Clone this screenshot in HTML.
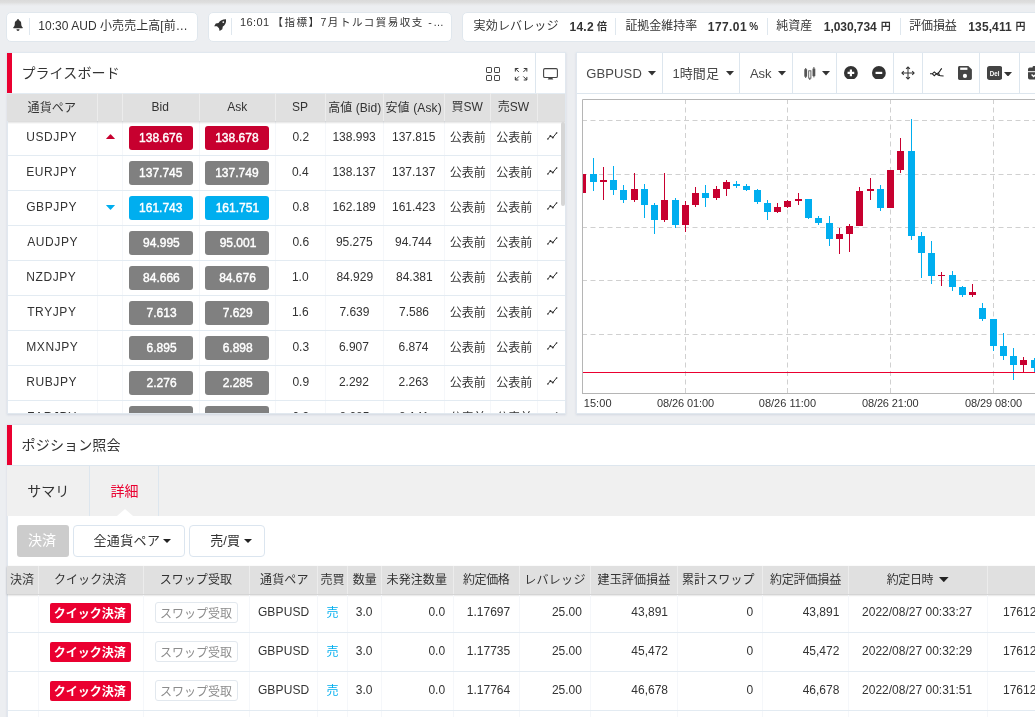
<!DOCTYPE html><html lang="ja"><head><meta charset="utf-8"><title>FX</title><style>
*{box-sizing:border-box;margin:0;padding:0}
html,body{width:1035px;height:717px;overflow:hidden}
body{background:#eceef1;font-family:"Liberation Sans","Noto Sans CJK JP",sans-serif;color:#333;font-size:12px;position:relative}
.abs{position:absolute}
.topshadow{left:0;top:0;width:1035px;height:6px;background:linear-gradient(#dadada 0,#dedede 40%,#e7e8ea 72%,#eceef1 100%)}
.tbox{background:#fff;border:1px solid #e0e7ed;border-radius:5px}
.panel{background:#fff;border:1px solid #e1e8ef;box-shadow:0 1px 2px rgba(160,175,195,.35)}
.redbar{background:#ea0030}
.t{white-space:nowrap;line-height:20px}
.vsep{width:1px;background:#dde6ee}
.hsep{height:1px;background:#e3ebf2}
.th{background:#e0e0e0}
.thsep{width:1px;background:#ececec}
.pb{border-radius:3px}
.pb.g{background:#808080}.pb.rd{background:#c7002f}.pb.bl{background:#00aeef}
.btn{border:1px solid #dbe5ef;border-radius:4px;background:#fff}
</style></head><body><div id="app" style="position:absolute;left:0;top:0;width:1035px;height:717px;overflow:hidden;will-change:transform"><div class="abs topshadow" style="left:0px;top:0px;width:1035px;height:6px;"></div>
<div class="abs tbox" style="left:6px;top:12px;width:192px;height:30px;"></div>
<svg class="abs" style="left:13px;top:19.400px" width="10" height="12" viewBox="0 0 10 12"><path d="M5 0C5.600 0 5.900 0.400 5.900 0.900V1.200C7.400 1.600 8.200 2.900 8.200 4.400C8.200 6.600 8.800 7.600 9.700 8.400C10.100 8.800 9.900 9.300 9.400 9.300H0.600C0.100 9.300 -0.100 8.800 0.300 8.400C1.200 7.600 1.800 6.600 1.800 4.400C1.800 2.900 2.600 1.600 4.100 1.200V0.900C4.100 0.400 4.400 0 5 0ZM3.500 10.300H6.500C6.500 11.200 5.800 12 5 12C4.200 12 3.500 11.200 3.500 10.300Z" fill="#333"/></svg>
<div class="abs " style="left:29px;top:18px;width:1px;height:17px;background:#dfe7ee"></div>
<div class="abs t" style="left:38.30px;top:15.80px;font-size:12px;letter-spacing:0.041px;">10:30 AUD 小売売上高[前…</div>
<div class="abs tbox" style="left:208px;top:12px;width:244px;height:30px;"></div>
<svg class="abs" style="left:213.900px;top:19.200px" width="12.400" height="12" viewBox="0 0 12.400 12"><path d="M12.100 0.300C12.400 3.200 11.200 5.800 8.800 7.600L8.300 10.200L5.600 12L5 9.200L3 7.300L0.200 7.300L1.800 4.500L4.500 3.900C6.200 1.500 9 0.100 12.100 0.300z" fill="#333"/><circle cx="9.300" cy="3.100" r="0.900" fill="#fff"/></svg>
<div class="abs " style="left:231px;top:18px;width:1px;height:17px;background:#dfe7ee"></div>
<div class="abs t" style="left:239.90px;top:12.00px;font-size:11px;letter-spacing:0.400px;">16:01</div>
<div class="abs t" style="left:272.40px;top:12.40px;font-size:10.5px;letter-spacing:1.527px;">【指標】7月トルコ貿易収支 -…</div>
<div class="abs tbox" style="left:462px;top:12px;width:600px;height:30px;"></div>
<div class="abs t" style="left:473.60px;top:16.10px;font-size:12px;letter-spacing:0.150px;">実効レバレッジ</div>
<div class="abs t" style="left:569.60px;top:16.60px;font-size:12px;font-weight:700;letter-spacing:0.200px;">14.2</div>
<div class="abs t" style="left:597.00px;top:17.30px;font-size:10px;font-weight:700;">倍</div>
<div class="abs " style="left:615px;top:18px;width:1px;height:17px;background:#dfe7ee"></div>
<div class="abs t" style="left:625.40px;top:16.10px;font-size:12px;letter-spacing:-0.040px;">証拠金維持率</div>
<div class="abs t" style="left:707.80px;top:16.60px;font-size:12px;font-weight:700;letter-spacing:0.420px;">177.01</div>
<div class="abs t" style="left:749.30px;top:17.30px;font-size:10px;font-weight:700;">%</div>
<div class="abs " style="left:767px;top:18px;width:1px;height:17px;background:#dfe7ee"></div>
<div class="abs t" style="left:776.35px;top:16.10px;font-size:12px;">純資産</div>
<div class="abs t" style="left:823.80px;top:16.60px;font-size:12px;font-weight:700;letter-spacing:-0.062px;">1,030,734</div>
<div class="abs t" style="left:880.85px;top:16.80px;font-size:10px;font-weight:700;">円</div>
<div class="abs " style="left:900px;top:18px;width:1px;height:17px;background:#dfe7ee"></div>
<div class="abs t" style="left:909.20px;top:16.10px;font-size:12px;letter-spacing:-0.133px;">評価損益</div>
<div class="abs t" style="left:968.30px;top:16.60px;font-size:12px;font-weight:700;letter-spacing:0.117px;">135,411</div>
<div class="abs t" style="left:1015.55px;top:16.80px;font-size:10px;font-weight:700;">円</div>
<div class="abs panel" style="left:7px;top:52px;width:559px;height:362px;"></div>
<div class="abs redbar" style="left:7px;top:53px;width:5px;height:40px;"></div>
<div class="abs t" style="left:21.40px;top:62.90px;font-size:14px;letter-spacing:0.117px;">プライスボード</div>
<svg class="abs" style="left:486px;top:67px" width="14" height="14" viewBox="0 0 14 14" fill="none" stroke="#444" stroke-width="1"><rect x="0.500" y="0.500" width="5" height="5" rx="0.600"/><rect x="8.500" y="0.500" width="5" height="5" rx="0.600"/><rect x="0.500" y="8.500" width="5" height="5" rx="0.600"/><rect x="8.500" y="8.500" width="5" height="5" rx="0.600"/></svg>
<svg class="abs" style="left:514px;top:66.600px" width="14.200" height="14.500" viewBox="0 0 16 16" fill="none" stroke="#333" stroke-width="1.100"><path d="M1.500 5V1.500H5M1.500 1.500L5.500 5.500M11 1.500h3.500V5M14.500 1.500L10.500 5.500M1.500 11v3.500H5M1.500 14.500L5.500 10.500M11 14.500h3.500V11M14.500 14.500L10.500 10.500"/></svg>
<div class="abs vsep" style="left:535px;top:53px;width:1px;height:40px;"></div>
<svg class="abs" style="left:543px;top:68px" width="15" height="12" viewBox="0 0 15 12"><rect x="0.600" y="0.600" width="13.800" height="8.900" rx="1.300" fill="none" stroke="#444" stroke-width="1.100"/><path d="M6 9.500h3l1.300 2h-5.600z" fill="#444"/></svg>
<div class="abs hsep" style="left:7px;top:93px;width:558px;height:1px;"></div>
<div class="abs th" style="left:7px;top:94px;width:558px;height:27px;"></div>
<div class="abs t" style="left:27.60px;top:97.70px;font-size:12px;letter-spacing:0.100px;">通貨ペア</div>
<div class="abs t" style="left:151.55px;top:97.30px;font-size:12px;">Bid</div>
<div class="abs t" style="left:227.30px;top:97.30px;font-size:12px;">Ask</div>
<div class="abs t" style="left:292.00px;top:97.30px;font-size:12px;">SP</div>
<div class="abs t" style="left:328.20px;top:97.70px;font-size:12px;letter-spacing:0.043px;">高値 (Bid)</div>
<div class="abs t" style="left:385.40px;top:97.70px;font-size:12px;letter-spacing:0.143px;">安値 (Ask)</div>
<div class="abs t" style="left:451.55px;top:97.20px;font-size:12px;">買SW</div>
<div class="abs t" style="left:497.65px;top:97.20px;font-size:12px;">売SW</div>
<div class="abs thsep" style="left:97px;top:93px;width:1px;height:28px;"></div>
<div class="abs thsep" style="left:122px;top:93px;width:1px;height:28px;"></div>
<div class="abs thsep" style="left:199px;top:93px;width:1px;height:28px;"></div>
<div class="abs thsep" style="left:275px;top:93px;width:1px;height:28px;"></div>
<div class="abs thsep" style="left:325px;top:93px;width:1px;height:28px;"></div>
<div class="abs thsep" style="left:383px;top:93px;width:1px;height:28px;"></div>
<div class="abs thsep" style="left:444px;top:93px;width:1px;height:28px;"></div>
<div class="abs thsep" style="left:490px;top:93px;width:1px;height:28px;"></div>
<div class="abs thsep" style="left:537px;top:93px;width:1px;height:28px;"></div>
<div class="abs" style="left:0;top:121px;width:565px;height:292px;overflow:hidden">
<div class="abs " style="left:97px;top:0px;width:1px;height:292px;background:#f5f7fa"></div>
<div class="abs " style="left:122px;top:0px;width:1px;height:292px;background:#f5f7fa"></div>
<div class="abs " style="left:199px;top:0px;width:1px;height:292px;background:#f5f7fa"></div>
<div class="abs " style="left:275px;top:0px;width:1px;height:292px;background:#f5f7fa"></div>
<div class="abs " style="left:325px;top:0px;width:1px;height:292px;background:#f5f7fa"></div>
<div class="abs " style="left:383px;top:0px;width:1px;height:292px;background:#f5f7fa"></div>
<div class="abs " style="left:444px;top:0px;width:1px;height:292px;background:#f5f7fa"></div>
<div class="abs " style="left:490px;top:0px;width:1px;height:292px;background:#f5f7fa"></div>
<div class="abs " style="left:537px;top:0px;width:1px;height:292px;background:#f5f7fa"></div>
<div class="abs t" style="left:26.20px;top:6.30px;font-size:12px;letter-spacing:0.600px;">USDJPY</div>
<svg class="abs" style="left:105.500px;top:13px" width="9" height="5.200" viewBox="0 0 9 5"><path d="M0.400 5Q-0.100 5 0.300 4.500L4 0.500Q4.500 0 5 0.500L8.700 4.500Q9.100 5 8.600 5z" fill="#c7002f"/></svg>
<div class="abs pb rd" style="left:129px;top:5px;width:64px;height:24px;"></div>
<div class="abs pb rd" style="left:205px;top:5px;width:64px;height:24px;"></div>
<div class="abs t" style="left:139.10px;top:7.00px;font-size:12px;color:#fff;-webkit-text-stroke:0.4px #fff;">138.676</div>
<div class="abs t" style="left:215.20px;top:7.00px;font-size:12px;color:#fff;-webkit-text-stroke:0.4px #fff;">138.678</div>
<div class="abs t" style="left:292.40px;top:6.30px;font-size:12px;">0.2</div>
<div class="abs t" style="left:332.40px;top:6.30px;font-size:12px;">138.993</div>
<div class="abs t" style="left:392.00px;top:6.30px;font-size:12px;">137.815</div>
<div class="abs t" style="left:449.65px;top:7.30px;font-size:12px;">公表前</div>
<div class="abs t" style="left:496.25px;top:7.30px;font-size:12px;">公表前</div>
<svg class="abs" style="left:547.300px;top:11.0px" width="10.600" height="8" viewBox="0 0 10.600 8" fill="none" stroke="#333" stroke-width="1"><path d="M0.600 7.200L3.400 4L5.800 5.600L9.800 0.700"/><circle cx="0.900" cy="7" r="0.800" fill="#333" stroke="none"/><circle cx="3.400" cy="4" r="1" fill="#333" stroke="none"/><circle cx="5.800" cy="5.600" r="1" fill="#333" stroke="none"/><circle cx="9.600" cy="1" r="0.800" fill="#333" stroke="none"/></svg>
<div class="abs hsep" style="left:8px;top:34px;width:557px;height:1px;"></div>
<div class="abs t" style="left:26.20px;top:41.30px;font-size:12px;letter-spacing:0.600px;">EURJPY</div>
<div class="abs pb g" style="left:129px;top:40px;width:64px;height:24px;"></div>
<div class="abs pb g" style="left:205px;top:40px;width:64px;height:24px;"></div>
<div class="abs t" style="left:139.10px;top:42.00px;font-size:12px;color:#fff;-webkit-text-stroke:0.4px #fff;">137.745</div>
<div class="abs t" style="left:215.20px;top:42.00px;font-size:12px;color:#fff;-webkit-text-stroke:0.4px #fff;">137.749</div>
<div class="abs t" style="left:291.90px;top:41.30px;font-size:12px;">0.4</div>
<div class="abs t" style="left:332.40px;top:41.30px;font-size:12px;">138.137</div>
<div class="abs t" style="left:392.00px;top:41.30px;font-size:12px;">137.137</div>
<div class="abs t" style="left:449.65px;top:42.30px;font-size:12px;">公表前</div>
<div class="abs t" style="left:496.25px;top:42.30px;font-size:12px;">公表前</div>
<svg class="abs" style="left:547.300px;top:46.0px" width="10.600" height="8" viewBox="0 0 10.600 8" fill="none" stroke="#333" stroke-width="1"><path d="M0.600 7.200L3.400 4L5.800 5.600L9.800 0.700"/><circle cx="0.900" cy="7" r="0.800" fill="#333" stroke="none"/><circle cx="3.400" cy="4" r="1" fill="#333" stroke="none"/><circle cx="5.800" cy="5.600" r="1" fill="#333" stroke="none"/><circle cx="9.600" cy="1" r="0.800" fill="#333" stroke="none"/></svg>
<div class="abs hsep" style="left:8px;top:69px;width:557px;height:1px;"></div>
<div class="abs t" style="left:26.20px;top:76.30px;font-size:12px;letter-spacing:0.600px;">GBPJPY</div>
<svg class="abs" style="left:105.500px;top:84px" width="9" height="5" viewBox="0 0 9 5"><path d="M0.400 0Q-0.100 0 0.300 0.500L4 4.500Q4.500 5 5 4.500L8.700 0.500Q9.100 0 8.600 0z" fill="#00aeef"/></svg>
<div class="abs pb bl" style="left:129px;top:75px;width:64px;height:24px;"></div>
<div class="abs pb bl" style="left:205px;top:75px;width:64px;height:24px;"></div>
<div class="abs t" style="left:139.10px;top:77.00px;font-size:12px;color:#fff;-webkit-text-stroke:0.4px #fff;">161.743</div>
<div class="abs t" style="left:215.70px;top:77.00px;font-size:12px;color:#fff;-webkit-text-stroke:0.4px #fff;">161.751</div>
<div class="abs t" style="left:292.40px;top:76.30px;font-size:12px;">0.8</div>
<div class="abs t" style="left:332.40px;top:76.30px;font-size:12px;">162.189</div>
<div class="abs t" style="left:392.00px;top:76.30px;font-size:12px;">161.423</div>
<div class="abs t" style="left:449.65px;top:77.30px;font-size:12px;">公表前</div>
<div class="abs t" style="left:496.25px;top:77.30px;font-size:12px;">公表前</div>
<svg class="abs" style="left:547.300px;top:81.0px" width="10.600" height="8" viewBox="0 0 10.600 8" fill="none" stroke="#333" stroke-width="1"><path d="M0.600 7.200L3.400 4L5.800 5.600L9.800 0.700"/><circle cx="0.900" cy="7" r="0.800" fill="#333" stroke="none"/><circle cx="3.400" cy="4" r="1" fill="#333" stroke="none"/><circle cx="5.800" cy="5.600" r="1" fill="#333" stroke="none"/><circle cx="9.600" cy="1" r="0.800" fill="#333" stroke="none"/></svg>
<div class="abs hsep" style="left:8px;top:104px;width:557px;height:1px;"></div>
<div class="abs t" style="left:27.20px;top:111.30px;font-size:12px;letter-spacing:0.600px;">AUDJPY</div>
<div class="abs pb g" style="left:129px;top:110px;width:64px;height:24px;"></div>
<div class="abs pb g" style="left:205px;top:110px;width:64px;height:24px;"></div>
<div class="abs t" style="left:143.10px;top:112.00px;font-size:12px;color:#fff;-webkit-text-stroke:0.4px #fff;">94.995</div>
<div class="abs t" style="left:219.70px;top:112.00px;font-size:12px;color:#fff;-webkit-text-stroke:0.4px #fff;">95.001</div>
<div class="abs t" style="left:292.40px;top:111.30px;font-size:12px;">0.6</div>
<div class="abs t" style="left:335.90px;top:111.30px;font-size:12px;">95.275</div>
<div class="abs t" style="left:395.00px;top:111.30px;font-size:12px;">94.744</div>
<div class="abs t" style="left:449.65px;top:112.30px;font-size:12px;">公表前</div>
<div class="abs t" style="left:496.25px;top:112.30px;font-size:12px;">公表前</div>
<svg class="abs" style="left:547.300px;top:116.0px" width="10.600" height="8" viewBox="0 0 10.600 8" fill="none" stroke="#333" stroke-width="1"><path d="M0.600 7.200L3.400 4L5.800 5.600L9.800 0.700"/><circle cx="0.900" cy="7" r="0.800" fill="#333" stroke="none"/><circle cx="3.400" cy="4" r="1" fill="#333" stroke="none"/><circle cx="5.800" cy="5.600" r="1" fill="#333" stroke="none"/><circle cx="9.600" cy="1" r="0.800" fill="#333" stroke="none"/></svg>
<div class="abs hsep" style="left:8px;top:139px;width:557px;height:1px;"></div>
<div class="abs t" style="left:26.20px;top:146.30px;font-size:12px;letter-spacing:0.600px;">NZDJPY</div>
<div class="abs pb g" style="left:129px;top:145px;width:64px;height:24px;"></div>
<div class="abs pb g" style="left:205px;top:145px;width:64px;height:24px;"></div>
<div class="abs t" style="left:143.10px;top:147.00px;font-size:12px;color:#fff;-webkit-text-stroke:0.4px #fff;">84.666</div>
<div class="abs t" style="left:219.20px;top:147.00px;font-size:12px;color:#fff;-webkit-text-stroke:0.4px #fff;">84.676</div>
<div class="abs t" style="left:291.90px;top:146.30px;font-size:12px;">1.0</div>
<div class="abs t" style="left:336.40px;top:146.30px;font-size:12px;">84.929</div>
<div class="abs t" style="left:396.00px;top:146.30px;font-size:12px;">84.381</div>
<div class="abs t" style="left:449.65px;top:147.30px;font-size:12px;">公表前</div>
<div class="abs t" style="left:496.25px;top:147.30px;font-size:12px;">公表前</div>
<svg class="abs" style="left:547.300px;top:151.0px" width="10.600" height="8" viewBox="0 0 10.600 8" fill="none" stroke="#333" stroke-width="1"><path d="M0.600 7.200L3.400 4L5.800 5.600L9.800 0.700"/><circle cx="0.900" cy="7" r="0.800" fill="#333" stroke="none"/><circle cx="3.400" cy="4" r="1" fill="#333" stroke="none"/><circle cx="5.800" cy="5.600" r="1" fill="#333" stroke="none"/><circle cx="9.600" cy="1" r="0.800" fill="#333" stroke="none"/></svg>
<div class="abs hsep" style="left:8px;top:174px;width:557px;height:1px;"></div>
<div class="abs t" style="left:27.20px;top:181.30px;font-size:12px;letter-spacing:0.600px;">TRYJPY</div>
<div class="abs pb g" style="left:129px;top:180px;width:64px;height:24px;"></div>
<div class="abs pb g" style="left:205px;top:180px;width:64px;height:24px;"></div>
<div class="abs t" style="left:146.60px;top:182.00px;font-size:12px;color:#fff;-webkit-text-stroke:0.4px #fff;">7.613</div>
<div class="abs t" style="left:222.70px;top:182.00px;font-size:12px;color:#fff;-webkit-text-stroke:0.4px #fff;">7.629</div>
<div class="abs t" style="left:291.90px;top:181.30px;font-size:12px;">1.6</div>
<div class="abs t" style="left:339.40px;top:181.30px;font-size:12px;">7.639</div>
<div class="abs t" style="left:399.00px;top:181.30px;font-size:12px;">7.586</div>
<div class="abs t" style="left:449.65px;top:182.30px;font-size:12px;">公表前</div>
<div class="abs t" style="left:496.25px;top:182.30px;font-size:12px;">公表前</div>
<svg class="abs" style="left:547.300px;top:186.0px" width="10.600" height="8" viewBox="0 0 10.600 8" fill="none" stroke="#333" stroke-width="1"><path d="M0.600 7.200L3.400 4L5.800 5.600L9.800 0.700"/><circle cx="0.900" cy="7" r="0.800" fill="#333" stroke="none"/><circle cx="3.400" cy="4" r="1" fill="#333" stroke="none"/><circle cx="5.800" cy="5.600" r="1" fill="#333" stroke="none"/><circle cx="9.600" cy="1" r="0.800" fill="#333" stroke="none"/></svg>
<div class="abs hsep" style="left:8px;top:209px;width:557px;height:1px;"></div>
<div class="abs t" style="left:26.20px;top:216.30px;font-size:12px;letter-spacing:0.600px;">MXNJPY</div>
<div class="abs pb g" style="left:129px;top:215px;width:64px;height:24px;"></div>
<div class="abs pb g" style="left:205px;top:215px;width:64px;height:24px;"></div>
<div class="abs t" style="left:146.60px;top:217.00px;font-size:12px;color:#fff;-webkit-text-stroke:0.4px #fff;">6.895</div>
<div class="abs t" style="left:222.70px;top:217.00px;font-size:12px;color:#fff;-webkit-text-stroke:0.4px #fff;">6.898</div>
<div class="abs t" style="left:292.40px;top:216.30px;font-size:12px;">0.3</div>
<div class="abs t" style="left:338.90px;top:216.30px;font-size:12px;">6.907</div>
<div class="abs t" style="left:398.50px;top:216.30px;font-size:12px;">6.874</div>
<div class="abs t" style="left:449.65px;top:217.30px;font-size:12px;">公表前</div>
<div class="abs t" style="left:496.25px;top:217.30px;font-size:12px;">公表前</div>
<svg class="abs" style="left:547.300px;top:221.0px" width="10.600" height="8" viewBox="0 0 10.600 8" fill="none" stroke="#333" stroke-width="1"><path d="M0.600 7.200L3.400 4L5.800 5.600L9.800 0.700"/><circle cx="0.900" cy="7" r="0.800" fill="#333" stroke="none"/><circle cx="3.400" cy="4" r="1" fill="#333" stroke="none"/><circle cx="5.800" cy="5.600" r="1" fill="#333" stroke="none"/><circle cx="9.600" cy="1" r="0.800" fill="#333" stroke="none"/></svg>
<div class="abs hsep" style="left:8px;top:244px;width:557px;height:1px;"></div>
<div class="abs t" style="left:26.20px;top:251.30px;font-size:12px;letter-spacing:0.600px;">RUBJPY</div>
<div class="abs pb g" style="left:129px;top:250px;width:64px;height:24px;"></div>
<div class="abs pb g" style="left:205px;top:250px;width:64px;height:24px;"></div>
<div class="abs t" style="left:146.60px;top:252.00px;font-size:12px;color:#fff;-webkit-text-stroke:0.4px #fff;">2.276</div>
<div class="abs t" style="left:222.70px;top:252.00px;font-size:12px;color:#fff;-webkit-text-stroke:0.4px #fff;">2.285</div>
<div class="abs t" style="left:292.40px;top:251.30px;font-size:12px;">0.9</div>
<div class="abs t" style="left:338.90px;top:251.30px;font-size:12px;">2.292</div>
<div class="abs t" style="left:398.50px;top:251.30px;font-size:12px;">2.263</div>
<div class="abs t" style="left:449.65px;top:252.30px;font-size:12px;">公表前</div>
<div class="abs t" style="left:496.25px;top:252.30px;font-size:12px;">公表前</div>
<svg class="abs" style="left:547.300px;top:256.0px" width="10.600" height="8" viewBox="0 0 10.600 8" fill="none" stroke="#333" stroke-width="1"><path d="M0.600 7.200L3.400 4L5.800 5.600L9.800 0.700"/><circle cx="0.900" cy="7" r="0.800" fill="#333" stroke="none"/><circle cx="3.400" cy="4" r="1" fill="#333" stroke="none"/><circle cx="5.800" cy="5.600" r="1" fill="#333" stroke="none"/><circle cx="9.600" cy="1" r="0.800" fill="#333" stroke="none"/></svg>
<div class="abs hsep" style="left:8px;top:279px;width:557px;height:1px;"></div>
<div class="abs t" style="left:27.20px;top:286.30px;font-size:12px;letter-spacing:0.600px;">ZARJPY</div>
<div class="abs pb g" style="left:129px;top:285px;width:64px;height:24px;"></div>
<div class="abs pb g" style="left:205px;top:285px;width:64px;height:24px;"></div>
<div class="abs t" style="left:292.40px;top:286.30px;font-size:12px;">0.9</div>
<div class="abs t" style="left:339.40px;top:286.30px;font-size:12px;">8.285</div>
<div class="abs t" style="left:399.00px;top:286.30px;font-size:12px;">8.141</div>
<div class="abs t" style="left:449.65px;top:287.30px;font-size:12px;">公表前</div>
<div class="abs t" style="left:496.25px;top:287.30px;font-size:12px;">公表前</div>
<svg class="abs" style="left:547.300px;top:291.0px" width="10.600" height="8" viewBox="0 0 10.600 8" fill="none" stroke="#333" stroke-width="1"><path d="M0.600 7.200L3.400 4L5.800 5.600L9.800 0.700"/><circle cx="0.900" cy="7" r="0.800" fill="#333" stroke="none"/><circle cx="3.400" cy="4" r="1" fill="#333" stroke="none"/><circle cx="5.800" cy="5.600" r="1" fill="#333" stroke="none"/><circle cx="9.600" cy="1" r="0.800" fill="#333" stroke="none"/></svg>
<div class="abs hsep" style="left:8px;top:314px;width:557px;height:1px;"></div>
</div>
<div class="abs " style="left:8px;top:121px;width:557px;height:3px;background:linear-gradient(rgba(0,0,0,.16),rgba(0,0,0,0))"></div>
<div class="abs " style="left:561px;top:122px;width:3.5px;height:83.5px;background:#d6d6d6;border-radius:2px"></div>
<div class="abs panel" style="left:576px;top:52px;width:470px;height:362px;"></div>
<div class="abs vsep" style="left:662px;top:53px;width:1px;height:40px;"></div>
<div class="abs vsep" style="left:739px;top:53px;width:1px;height:40px;"></div>
<div class="abs vsep" style="left:792px;top:53px;width:1px;height:40px;"></div>
<div class="abs vsep" style="left:836px;top:53px;width:1px;height:40px;"></div>
<div class="abs vsep" style="left:893px;top:53px;width:1px;height:40px;"></div>
<div class="abs vsep" style="left:922px;top:53px;width:1px;height:40px;"></div>
<div class="abs vsep" style="left:979px;top:53px;width:1px;height:40px;"></div>
<div class="abs vsep" style="left:1019px;top:53px;width:1px;height:40px;"></div>
<div class="abs " style="left:577px;top:93px;width:460px;height:1px;background:#dde6ee"></div>
<div class="abs t" style="left:586.30px;top:64.00px;font-size:13px;letter-spacing:0.120px;color:#484848;">GBPUSD</div>
<svg class="abs" style="left:648.4px;top:71.3px" width="8.0" height="4.6000000000000085" viewBox="0 0 8.0 4.6000000000000085"><path d="M0 0H8.0L4.0 4.6000000000000085z" fill="#333"/></svg>
<div class="abs t" style="left:672.50px;top:64.30px;font-size:13px;letter-spacing:0.067px;color:#484848;">1時間足</div>
<svg class="abs" style="left:725.5px;top:71.3px" width="8.0" height="4.6000000000000085" viewBox="0 0 8.0 4.6000000000000085"><path d="M0 0H8.0L4.0 4.6000000000000085z" fill="#333"/></svg>
<div class="abs t" style="left:749.95px;top:64.00px;font-size:13px;color:#484848;">Ask</div>
<svg class="abs" style="left:778px;top:71.3px" width="8" height="4.6000000000000085" viewBox="0 0 8 4.6000000000000085"><path d="M0 0H8L4.0 4.6000000000000085z" fill="#333"/></svg>
<svg class="abs" style="left:803.500px;top:66.500px" width="12" height="13" viewBox="0 0 12 13"><g fill="#555"><rect x="0.300" y="2.200" width="2.800" height="7.500"/><rect x="1.200" y="1" width="1" height="10"/><rect x="8.500" y="1.600" width="2.800" height="7.500"/><rect x="9.400" y="0" width="1" height="10.400"/><rect x="5.300" y="5" width="1" height="8"/></g><rect x="4.700" y="3.800" width="2.200" height="7.400" fill="#fff" stroke="#555" stroke-width="0.900"/></svg>
<svg class="abs" style="left:822.2px;top:71px" width="8.0" height="4.599999999999994" viewBox="0 0 8.0 4.599999999999994"><path d="M0 0H8.0L4.0 4.599999999999994z" fill="#333"/></svg>
<svg class="abs" style="left:844px;top:65.700px" width="13.800" height="13.800" viewBox="0 0 14 14"><circle cx="7" cy="7" r="7" fill="#333"/><path d="M3.600 7h6.800M7 3.600v6.800" stroke="#fff" stroke-width="2.200"/></svg>
<svg class="abs" style="left:871.800px;top:65.700px" width="13.800" height="13.800" viewBox="0 0 14 14"><circle cx="7" cy="7" r="7" fill="#333"/><path d="M3.600 7h6.800" stroke="#fff" stroke-width="2.200"/></svg>
<svg class="abs" style="left:900.800px;top:65.800px" width="14" height="14" viewBox="0 0 16 16" fill="none" stroke="#333" stroke-width="1.150"><path d="M8 1v14M1 8h14M5.800 3.200L8 1l2.200 2.200M5.800 12.800L8 15l2.200-2.200M3.200 5.800L1 8l2.200 2.200M12.800 5.800L15 8l-2.200 2.200"/></svg>
<svg class="abs" style="left:930px;top:67.500px" width="14" height="11" viewBox="0 0 14 11" fill="none" stroke="#222" stroke-width="1.100"><path d="M0 5.800h2.300M2.300 5.800L4.300 3.900L6.400 5.800L4.300 7.700zM6.400 5.800C8 5.600 9 4.800 9.600 3.600C10.200 2.200 10.800 1 11.900 0.400M6.600 6.200C8 7.600 9.200 7.800 10.600 7.800L13.600 8M8.300 4.400L9.600 7.600"/></svg>
<svg class="abs" style="left:957.900px;top:65.700px" width="13.900" height="13.900" viewBox="0 0 14 14"><path d="M1.600 0h8.800L14 3.600v8.800c0 .9-.7 1.600-1.600 1.600H1.600C.7 14 0 13.300 0 12.400V1.600C0 .7.700 0 1.600 0z" fill="#444"/><rect x="2.200" y="1.600" width="7.300" height="2.300" fill="#fff"/><circle cx="7" cy="10" r="2.100" fill="#fff"/></svg>
<svg class="abs" style="left:986.900px;top:65.700px" width="15.300" height="13.900" viewBox="0 0 15.300 13.900"><rect width="15.300" height="13.900" rx="2.600" fill="#444"/><text x="7.650" y="9.600" font-size="6.800" font-weight="bold" fill="#fff" text-anchor="middle" textLength="9.600" lengthAdjust="spacingAndGlyphs" font-family="Liberation Sans,sans-serif">Del</text></svg>
<svg class="abs" style="left:1004.3px;top:71.7px" width="8.0" height="4.599999999999994" viewBox="0 0 8.0 4.599999999999994"><path d="M0 0H8.0L4.0 4.599999999999994z" fill="#333"/></svg>
<svg class="abs" style="left:1028.400px;top:66px" width="13" height="13.600" viewBox="0 0 13 13.600"><path d="M1.800 1.600h2.700a2 1.800 0 0 1 4 0h2.700a1.800 1.800 0 0 1 1.800 1.800v8.400a1.800 1.800 0 0 1-1.800 1.800H1.800a1.800 1.800 0 0 1-1.800-1.800V3.400a1.800 1.800 0 0 1 1.800-1.800z" fill="#444"/><rect x="0" y="5.200" width="13" height="1" fill="#fff"/><path d="M3.600 8.600L5.600 10.600L9.400 7" stroke="#fff" stroke-width="1.400" fill="none"/></svg>
<svg class="abs" style="left:582px;top:99px" width="453" height="320" viewBox="582 99 453 320"><path d="M582 120.5H1035" stroke="#d0d0d0" stroke-width="1" stroke-dasharray="5 3.500" fill="none"/><path d="M582 174.5H1035" stroke="#d0d0d0" stroke-width="1" stroke-dasharray="5 3.500" fill="none"/><path d="M582 227.5H1035" stroke="#d0d0d0" stroke-width="1" stroke-dasharray="5 3.500" fill="none"/><path d="M582 280.5H1035" stroke="#d0d0d0" stroke-width="1" stroke-dasharray="5 3.500" fill="none"/><path d="M582 334.5H1035" stroke="#d0d0d0" stroke-width="1" stroke-dasharray="5 3.500" fill="none"/><path d="M685.5 99V393" stroke="#d0d0d0" stroke-width="1" stroke-dasharray="5 3.500" fill="none"/><path d="M787.5 99V393" stroke="#d0d0d0" stroke-width="1" stroke-dasharray="5 3.500" fill="none"/><path d="M890.5 99V393" stroke="#d0d0d0" stroke-width="1" stroke-dasharray="5 3.500" fill="none"/><path d="M993.5 99V393" stroke="#d0d0d0" stroke-width="1" stroke-dasharray="5 3.500" fill="none"/><clipPath id="cc"><rect x="583" y="99" width="453" height="300"/></clipPath><g clip-path="url(#cc)"><rect x="582.0" y="174" width="1" height="19" fill="#c7002f"/><rect x="579.0" y="174" width="7" height="19" fill="#c7002f"/><rect x="593.0" y="158" width="1" height="33" fill="#00aeef"/><rect x="590.0" y="174" width="7" height="8" fill="#00aeef"/><rect x="603.0" y="167" width="1" height="33" fill="#c7002f"/><rect x="600.0" y="180" width="7" height="2" fill="#c7002f"/><rect x="613.0" y="166" width="1" height="29" fill="#00aeef"/><rect x="610.0" y="180" width="7" height="10" fill="#00aeef"/><rect x="623.0" y="185" width="1" height="18" fill="#00aeef"/><rect x="620.0" y="190" width="7" height="10" fill="#00aeef"/><rect x="634.0" y="173" width="1" height="29" fill="#c7002f"/><rect x="631.0" y="189" width="7" height="11" fill="#c7002f"/><rect x="644.0" y="184" width="1" height="34" fill="#00aeef"/><rect x="641.0" y="189" width="7" height="16" fill="#00aeef"/><rect x="654.0" y="203" width="1" height="31" fill="#00aeef"/><rect x="651.0" y="205" width="7" height="15" fill="#00aeef"/><rect x="664.0" y="173" width="1" height="49" fill="#c7002f"/><rect x="661.0" y="200" width="7" height="20" fill="#c7002f"/><rect x="675.0" y="198" width="1" height="30" fill="#00aeef"/><rect x="672.0" y="200" width="7" height="25" fill="#00aeef"/><rect x="685.0" y="201" width="1" height="31" fill="#c7002f"/><rect x="682.0" y="205" width="7" height="20" fill="#c7002f"/><rect x="695.0" y="187" width="1" height="20" fill="#c7002f"/><rect x="692.0" y="193" width="7" height="12" fill="#c7002f"/><rect x="705.0" y="185" width="1" height="22" fill="#00aeef"/><rect x="702.0" y="193" width="7" height="5" fill="#00aeef"/><rect x="716.0" y="186" width="1" height="14" fill="#c7002f"/><rect x="713.0" y="189" width="7" height="9" fill="#c7002f"/><rect x="726.0" y="180" width="1" height="16" fill="#c7002f"/><rect x="723.0" y="182" width="7" height="7" fill="#c7002f"/><rect x="736.0" y="181" width="1" height="7" fill="#00aeef"/><rect x="733.0" y="184" width="7" height="2" fill="#00aeef"/><rect x="746.0" y="184" width="1" height="7" fill="#00aeef"/><rect x="743.0" y="186" width="7" height="4" fill="#00aeef"/><rect x="757.0" y="189" width="1" height="15" fill="#00aeef"/><rect x="754.0" y="190" width="7" height="12" fill="#00aeef"/><rect x="767.0" y="200" width="1" height="20" fill="#00aeef"/><rect x="764.0" y="203" width="7" height="9" fill="#00aeef"/><rect x="777.0" y="203" width="1" height="10" fill="#c7002f"/><rect x="774.0" y="207" width="7" height="5" fill="#c7002f"/><rect x="787.0" y="200" width="1" height="8" fill="#c7002f"/><rect x="784.0" y="201" width="7" height="6" fill="#c7002f"/><rect x="798.0" y="193" width="1" height="12" fill="#c7002f"/><rect x="795.0" y="199" width="7" height="2" fill="#c7002f"/><rect x="808.0" y="199" width="1" height="20" fill="#00aeef"/><rect x="805.0" y="199" width="7" height="19" fill="#00aeef"/><rect x="818.0" y="216" width="1" height="9" fill="#00aeef"/><rect x="815.0" y="218" width="7" height="5" fill="#00aeef"/><rect x="829.0" y="216" width="1" height="30" fill="#00aeef"/><rect x="826.0" y="223" width="7" height="16" fill="#00aeef"/><rect x="839.0" y="228" width="1" height="26" fill="#c7002f"/><rect x="836.0" y="234" width="7" height="5" fill="#c7002f"/><rect x="849.0" y="224" width="1" height="28" fill="#c7002f"/><rect x="846.0" y="226" width="7" height="8" fill="#c7002f"/><rect x="859.0" y="187" width="1" height="39" fill="#c7002f"/><rect x="856.0" y="191" width="7" height="35" fill="#c7002f"/><rect x="870.0" y="178" width="1" height="22" fill="#c7002f"/><rect x="867.0" y="189" width="7" height="2" fill="#c7002f"/><rect x="880.0" y="185" width="1" height="26" fill="#00aeef"/><rect x="877.0" y="189" width="7" height="19" fill="#00aeef"/><rect x="890.0" y="170" width="1" height="38" fill="#c7002f"/><rect x="887.0" y="170" width="7" height="38" fill="#c7002f"/><rect x="900.0" y="138" width="1" height="35" fill="#c7002f"/><rect x="897.0" y="151" width="7" height="19" fill="#c7002f"/><rect x="911.0" y="119" width="1" height="121" fill="#00aeef"/><rect x="908.0" y="151" width="7" height="85" fill="#00aeef"/><rect x="921.0" y="232" width="1" height="46" fill="#00aeef"/><rect x="918.0" y="236" width="7" height="17" fill="#00aeef"/><rect x="931.0" y="241" width="1" height="43" fill="#00aeef"/><rect x="928.0" y="253" width="7" height="23" fill="#00aeef"/><rect x="941.0" y="272" width="1" height="14" fill="#c7002f"/><rect x="938.0" y="275" width="7" height="1" fill="#c7002f"/><rect x="952.0" y="271" width="1" height="20" fill="#00aeef"/><rect x="949.0" y="275" width="7" height="12" fill="#00aeef"/><rect x="962.0" y="286" width="1" height="11" fill="#00aeef"/><rect x="959.0" y="287" width="7" height="8" fill="#00aeef"/><rect x="972.0" y="284" width="1" height="13" fill="#c7002f"/><rect x="969.0" y="292" width="7" height="3" fill="#c7002f"/><rect x="982.0" y="303" width="1" height="18" fill="#00aeef"/><rect x="979.0" y="308" width="7" height="11" fill="#00aeef"/><rect x="993.0" y="319" width="1" height="32" fill="#00aeef"/><rect x="990.0" y="319" width="7" height="27" fill="#00aeef"/><rect x="1003.0" y="333" width="1" height="27" fill="#00aeef"/><rect x="1000.0" y="346" width="7" height="10" fill="#00aeef"/><rect x="1013.0" y="348" width="1" height="32" fill="#00aeef"/><rect x="1010.0" y="356" width="7" height="9" fill="#00aeef"/><rect x="1023.0" y="357" width="1" height="16" fill="#c7002f"/><rect x="1020.0" y="360" width="7" height="5" fill="#c7002f"/><rect x="1034.0" y="358" width="1" height="15" fill="#00aeef"/><rect x="1031.0" y="360" width="7" height="8" fill="#00aeef"/><rect x="1044.0" y="361" width="1" height="12" fill="#00aeef"/><rect x="1041.0" y="364" width="7" height="7" fill="#00aeef"/></g><path d="M582 372.500H1035" stroke="#ea0030" stroke-width="1" fill="none"/><path d="M582.5 393.500V99.5H1035" stroke="#b5b5b5" stroke-width="1" fill="none"/><path d="M582 393.500H1035" stroke="#b5b5b5" stroke-width="1" fill="none"/></svg>
<div class="abs t" style="left:583.70px;top:393.20px;font-size:11px;letter-spacing:0.075px;">15:00</div>
<div class="abs t" style="left:657.00px;top:393.20px;font-size:11px;letter-spacing:-0.100px;">08/26 01:00</div>
<div class="abs t" style="left:758.80px;top:393.20px;font-size:11px;">08/26 11:00</div>
<div class="abs t" style="left:862.10px;top:393.20px;font-size:11px;letter-spacing:-0.160px;">08/26 21:00</div>
<div class="abs t" style="left:965.00px;top:393.20px;font-size:11px;letter-spacing:-0.100px;">08/29 08:00</div>
<div class="abs panel" style="left:7px;top:424px;width:1040px;height:300px;"></div>
<div class="abs redbar" style="left:7px;top:425px;width:5px;height:40px;"></div>
<div class="abs t" style="left:21.60px;top:434.70px;font-size:14px;letter-spacing:0.150px;">ポジション照会</div>
<div class="abs " style="left:7px;top:465px;width:1030px;height:51px;background:#f0f0f0;border-top:1px solid #dde6ee"></div>
<div class="abs vsep" style="left:89px;top:466px;width:1px;height:50px;"></div>
<div class="abs vsep" style="left:158px;top:466px;width:1px;height:50px;"></div>
<div class="abs t" style="left:27.25px;top:481.20px;font-size:14px;">サマリ</div>
<div class="abs t" style="left:110.55px;top:481.20px;font-size:14px;color:#ea0030;">詳細</div>
<svg class="abs" style="left:117px;top:509px" width="16" height="7" viewBox="0 0 16 7"><path d="M0 7L8 0L16 7z" fill="#fff"/></svg>
<div class="abs " style="left:17px;top:525px;width:52px;height:32px;background:#ccc;border-radius:3px"></div>
<div class="abs t" style="left:27.95px;top:530.20px;font-size:14px;color:#fff;">決済</div>
<div class="abs btn" style="left:73px;top:525px;width:112px;height:32px;"></div>
<div class="abs t" style="left:93.40px;top:530.70px;font-size:13px;letter-spacing:0.400px;">全通貨ペア</div>
<svg class="abs" style="left:162.8px;top:538.5px" width="8.0" height="4.0" viewBox="0 0 8.0 4.0"><path d="M0 0H8.0L4.0 4.0z" fill="#222"/></svg>
<div class="abs btn" style="left:189px;top:525px;width:76px;height:32px;"></div>
<div class="abs t" style="left:210.35px;top:530.70px;font-size:13px;">売/買</div>
<svg class="abs" style="left:243.6px;top:538.5px" width="8.0" height="4.0" viewBox="0 0 8.0 4.0"><path d="M0 0H8.0L4.0 4.0z" fill="#222"/></svg>
<div class="abs th" style="left:7px;top:566px;width:1030px;height:28px;box-shadow:0 1px 2px rgba(0,0,0,.25)"></div>
<div class="abs thsep" style="left:38px;top:566px;width:1px;height:28px;"></div>
<div class="abs thsep" style="left:143px;top:566px;width:1px;height:28px;"></div>
<div class="abs thsep" style="left:249px;top:566px;width:1px;height:28px;"></div>
<div class="abs thsep" style="left:317px;top:566px;width:1px;height:28px;"></div>
<div class="abs thsep" style="left:347px;top:566px;width:1px;height:28px;"></div>
<div class="abs thsep" style="left:381px;top:566px;width:1px;height:28px;"></div>
<div class="abs thsep" style="left:453px;top:566px;width:1px;height:28px;"></div>
<div class="abs thsep" style="left:519px;top:566px;width:1px;height:28px;"></div>
<div class="abs thsep" style="left:590px;top:566px;width:1px;height:28px;"></div>
<div class="abs thsep" style="left:677px;top:566px;width:1px;height:28px;"></div>
<div class="abs thsep" style="left:762px;top:566px;width:1px;height:28px;"></div>
<div class="abs thsep" style="left:848px;top:566px;width:1px;height:28px;"></div>
<div class="abs thsep" style="left:987px;top:566px;width:1px;height:28px;"></div>
<div class="abs t" style="left:10.10px;top:570.20px;font-size:12px;">決済</div>
<div class="abs t" style="left:54.00px;top:570.20px;font-size:12px;letter-spacing:0.060px;">クイック決済</div>
<div class="abs t" style="left:159.70px;top:570.20px;font-size:12px;letter-spacing:0.060px;">スワップ受取</div>
<div class="abs t" style="left:260.00px;top:570.20px;font-size:12px;letter-spacing:0.133px;">通貨ペア</div>
<div class="abs t" style="left:320.40px;top:570.20px;font-size:12px;">売買</div>
<div class="abs t" style="left:352.65px;top:570.20px;font-size:12px;">数量</div>
<div class="abs t" style="left:386.60px;top:570.20px;font-size:12px;letter-spacing:0.075px;">未発注数量</div>
<div class="abs t" style="left:463.00px;top:570.20px;font-size:12px;letter-spacing:-0.400px;">約定価格</div>
<div class="abs t" style="left:524.20px;top:569.70px;font-size:12px;letter-spacing:0.300px;">レバレッジ</div>
<div class="abs t" style="left:597.50px;top:570.20px;font-size:12px;letter-spacing:0.140px;">建玉評価損益</div>
<div class="abs t" style="left:682.00px;top:570.20px;font-size:12px;letter-spacing:0.120px;">累計スワップ</div>
<div class="abs t" style="left:769.90px;top:570.20px;font-size:12px;letter-spacing:-0.140px;">約定評価損益</div>
<div class="abs t" style="left:886.70px;top:570.20px;font-size:12px;letter-spacing:-0.367px;">約定日時</div>
<svg class="abs" style="left:939.300px;top:577px" width="9.600" height="5.200" viewBox="0 0 10 6" preserveAspectRatio="none"><path d="M0 0h10L5 6z" fill="#222"/></svg>
<div class="abs " style="left:38px;top:595px;width:1px;height:125px;background:#f5f7fa"></div>
<div class="abs " style="left:143px;top:595px;width:1px;height:125px;background:#f5f7fa"></div>
<div class="abs " style="left:249px;top:595px;width:1px;height:125px;background:#f5f7fa"></div>
<div class="abs " style="left:317px;top:595px;width:1px;height:125px;background:#f5f7fa"></div>
<div class="abs " style="left:347px;top:595px;width:1px;height:125px;background:#f5f7fa"></div>
<div class="abs " style="left:381px;top:595px;width:1px;height:125px;background:#f5f7fa"></div>
<div class="abs " style="left:453px;top:595px;width:1px;height:125px;background:#f5f7fa"></div>
<div class="abs " style="left:519px;top:595px;width:1px;height:125px;background:#f5f7fa"></div>
<div class="abs " style="left:590px;top:595px;width:1px;height:125px;background:#f5f7fa"></div>
<div class="abs " style="left:677px;top:595px;width:1px;height:125px;background:#f5f7fa"></div>
<div class="abs " style="left:762px;top:595px;width:1px;height:125px;background:#f5f7fa"></div>
<div class="abs " style="left:848px;top:595px;width:1px;height:125px;background:#f5f7fa"></div>
<div class="abs " style="left:987px;top:595px;width:1px;height:125px;background:#f5f7fa"></div>
<div class="abs " style="left:49.7px;top:603px;width:81.2px;height:20px;background:#ea0030;border-radius:2px"></div>
<div class="abs t" style="left:53.80px;top:603.80px;font-size:12px;font-weight:700;color:#fff;">クイック決済</div>
<div class="abs " style="left:155.3px;top:602.1px;width:82.5px;height:21.4px;background:#fff;border:1px solid #e2e8ee;border-radius:3px"></div>
<div class="abs t" style="left:160.00px;top:603.80px;font-size:12px;color:#8c8c8c;">スワップ受取</div>
<div class="abs t" style="left:257.90px;top:601.80px;font-size:12px;letter-spacing:0.140px;">GBPUSD</div>
<div class="abs t" style="left:326.45px;top:602.60px;font-size:12px;color:#00aeef;">売</div>
<div class="abs t" style="left:355.75px;top:601.80px;font-size:12px;">3.0</div>
<div class="abs t" style="left:428.40px;top:601.80px;font-size:12px;">0.0</div>
<div class="abs t" style="left:466.80px;top:601.80px;font-size:12px;">1.17697</div>
<div class="abs t" style="left:551.90px;top:601.80px;font-size:12px;">25.00</div>
<div class="abs t" style="left:631.30px;top:601.80px;font-size:12px;">43,891</div>
<div class="abs t" style="left:746.50px;top:601.80px;font-size:12px;">0</div>
<div class="abs t" style="left:802.70px;top:601.80px;font-size:12px;">43,891</div>
<div class="abs t" style="left:862.10px;top:601.80px;font-size:12px;">2022/08/27 00:33:27</div>
<div class="abs t" style="left:1003.00px;top:601.80px;font-size:12px;">176123456</div>
<div class="abs hsep" style="left:8px;top:632px;width:1030px;height:1px;"></div>
<div class="abs " style="left:49.7px;top:642px;width:81.2px;height:20px;background:#ea0030;border-radius:2px"></div>
<div class="abs t" style="left:53.80px;top:642.80px;font-size:12px;font-weight:700;color:#fff;">クイック決済</div>
<div class="abs " style="left:155.3px;top:641.1px;width:82.5px;height:21.4px;background:#fff;border:1px solid #e2e8ee;border-radius:3px"></div>
<div class="abs t" style="left:160.00px;top:642.80px;font-size:12px;color:#8c8c8c;">スワップ受取</div>
<div class="abs t" style="left:257.90px;top:640.80px;font-size:12px;letter-spacing:0.140px;">GBPUSD</div>
<div class="abs t" style="left:326.45px;top:641.60px;font-size:12px;color:#00aeef;">売</div>
<div class="abs t" style="left:355.75px;top:640.80px;font-size:12px;">3.0</div>
<div class="abs t" style="left:428.40px;top:640.80px;font-size:12px;">0.0</div>
<div class="abs t" style="left:466.80px;top:640.80px;font-size:12px;">1.17735</div>
<div class="abs t" style="left:551.90px;top:640.80px;font-size:12px;">25.00</div>
<div class="abs t" style="left:631.30px;top:640.80px;font-size:12px;">45,472</div>
<div class="abs t" style="left:746.50px;top:640.80px;font-size:12px;">0</div>
<div class="abs t" style="left:802.70px;top:640.80px;font-size:12px;">45,472</div>
<div class="abs t" style="left:862.10px;top:640.80px;font-size:12px;">2022/08/27 00:32:29</div>
<div class="abs t" style="left:1003.00px;top:640.80px;font-size:12px;">176123456</div>
<div class="abs hsep" style="left:8px;top:671px;width:1030px;height:1px;"></div>
<div class="abs " style="left:49.7px;top:681px;width:81.2px;height:20px;background:#ea0030;border-radius:2px"></div>
<div class="abs t" style="left:53.80px;top:681.80px;font-size:12px;font-weight:700;color:#fff;">クイック決済</div>
<div class="abs " style="left:155.3px;top:680.1px;width:82.5px;height:21.4px;background:#fff;border:1px solid #e2e8ee;border-radius:3px"></div>
<div class="abs t" style="left:160.00px;top:681.80px;font-size:12px;color:#8c8c8c;">スワップ受取</div>
<div class="abs t" style="left:257.90px;top:679.80px;font-size:12px;letter-spacing:0.140px;">GBPUSD</div>
<div class="abs t" style="left:326.45px;top:680.60px;font-size:12px;color:#00aeef;">売</div>
<div class="abs t" style="left:355.75px;top:679.80px;font-size:12px;">3.0</div>
<div class="abs t" style="left:428.40px;top:679.80px;font-size:12px;">0.0</div>
<div class="abs t" style="left:466.80px;top:679.80px;font-size:12px;">1.17764</div>
<div class="abs t" style="left:551.90px;top:679.80px;font-size:12px;">25.00</div>
<div class="abs t" style="left:631.30px;top:679.80px;font-size:12px;">46,678</div>
<div class="abs t" style="left:746.50px;top:679.80px;font-size:12px;">0</div>
<div class="abs t" style="left:802.70px;top:679.80px;font-size:12px;">46,678</div>
<div class="abs t" style="left:862.10px;top:679.80px;font-size:12px;">2022/08/27 00:31:51</div>
<div class="abs t" style="left:1003.00px;top:679.80px;font-size:12px;">176123456</div>
<div class="abs hsep" style="left:8px;top:710px;width:1030px;height:1px;"></div></div></body></html>
